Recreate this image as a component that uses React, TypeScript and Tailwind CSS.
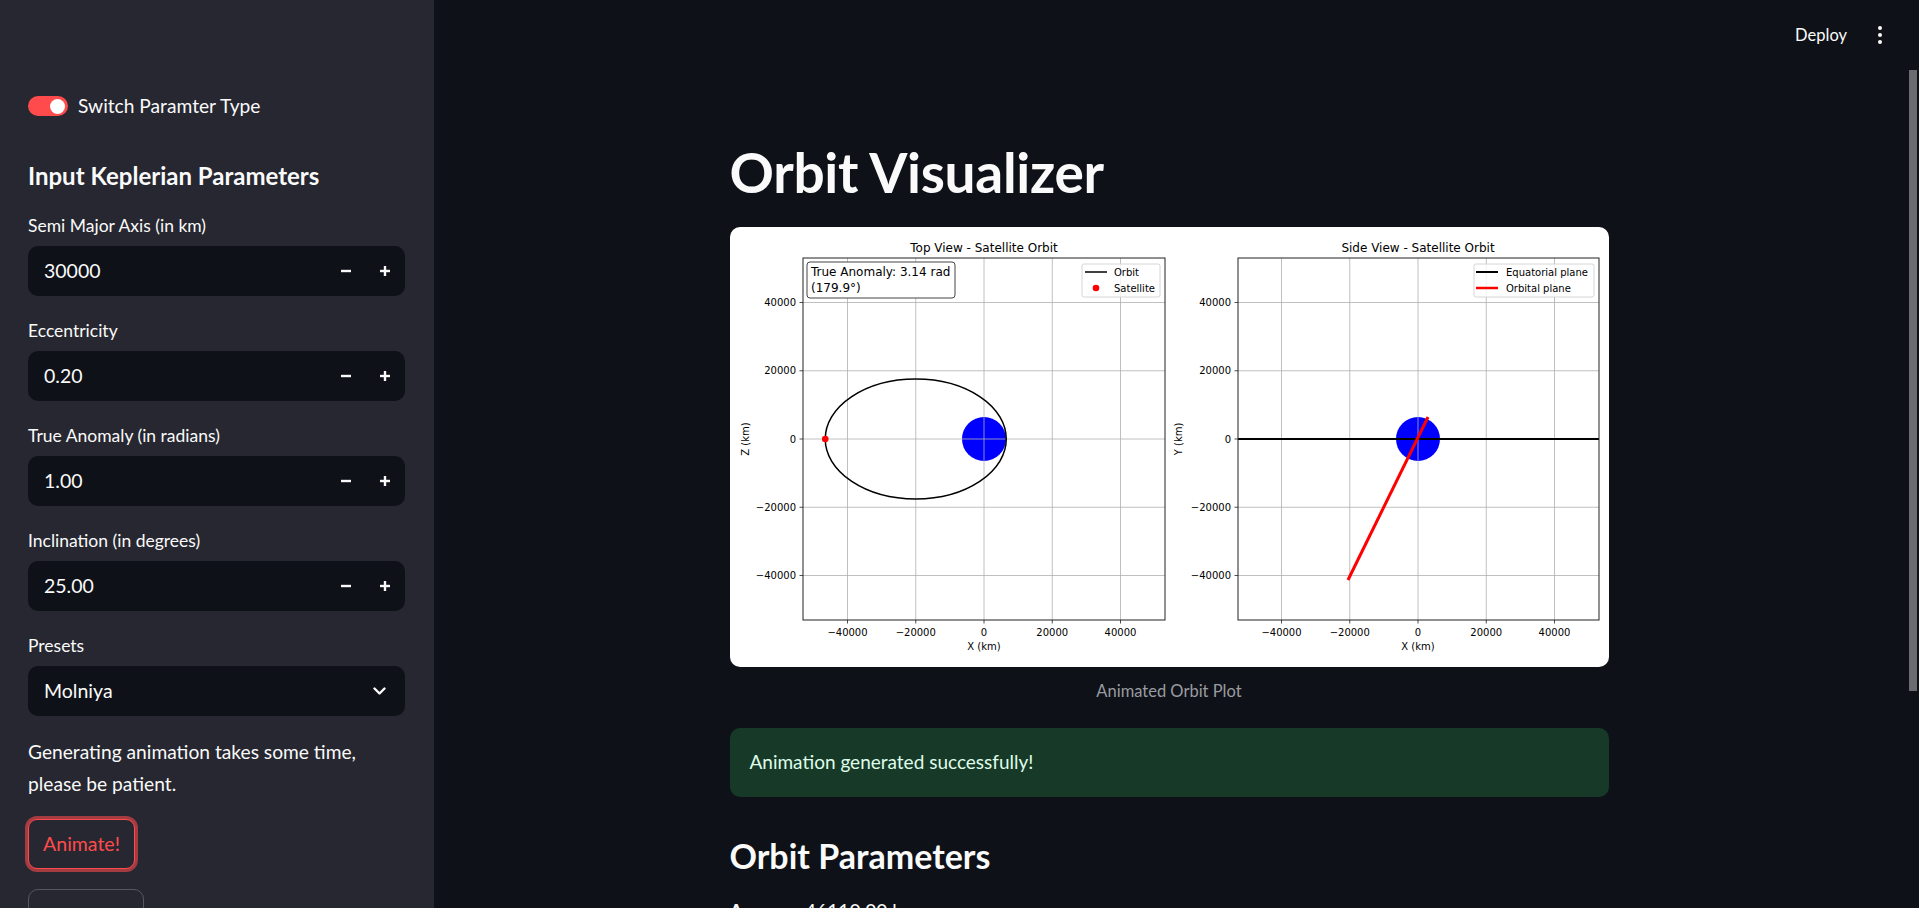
import React from "react";

const S = 136.5 / 40000;
const TICKS = [-40000, -20000, 0, 20000, 40000];
const CY = 212;
const Y0 = 31;
const Y1 = 393;

const fmt = (v: number) => (v < 0 ? "\u2212" + Math.abs(v) : String(v));

// one matplotlib axes: frame, grid, ticks and labels
function Axes({ x0, x1, cx, title, ylabel, ylabelX, children, overlay }: {
  x0: number;
  x1: number;
  cx: number;
  title: string;
  ylabel: string;
  ylabelX: number;
  children?: React.ReactNode;
  overlay?: React.ReactNode;
}) {
  return (
    <g fontFamily="'DejaVu Sans', sans-serif" fill="#000">
      <text x={cx} y={25} fontSize={12} textAnchor="middle">{title}</text>
      {children}
      {TICKS.map((t) => (
        <g key={"g" + t}>
          <line x1={cx + t * S} x2={cx + t * S} y1={Y0} y2={Y1} stroke="#b0b0b0" strokeWidth={0.8} />
          <line x1={x0} x2={x1} y1={CY - t * S} y2={CY - t * S} stroke="#b0b0b0" strokeWidth={0.8} />
        </g>
      ))}
      {overlay}
      <rect x={x0} y={Y0} width={x1 - x0} height={Y1 - Y0} fill="none" stroke="#222" strokeWidth={1} />
      {TICKS.map((t) => (
        <g key={"t" + t}>
          <line x1={cx + t * S} x2={cx + t * S} y1={Y1} y2={Y1 + 3.5} stroke="#222" strokeWidth={0.8} />
          <text x={cx + t * S} y={409} fontSize={10} textAnchor="middle">{fmt(t)}</text>
          <line x1={x0 - 3.5} x2={x0} y1={CY - t * S} y2={CY - t * S} stroke="#222" strokeWidth={0.8} />
          <text x={x0 - 7} y={CY - t * S + 3.5} fontSize={10} textAnchor="end">{fmt(t)}</text>
        </g>
      ))}
      <text x={cx} y={423} fontSize={10} textAnchor="middle">X (km)</text>
      <text x={ylabelX} y={CY} fontSize={10} textAnchor="middle" transform={`rotate(-90 ${ylabelX} ${CY})`} dy={3.5}>{ylabel}</text>
    </g>
  );
}

function OrbitPlot() {
  const lx = 254;
  const rx = 688;
  return (
    <svg width={879} height={440} viewBox="0 0 879 440" className="block">
      <Axes
        x0={73}
        x1={435}
        cx={lx}
        title="Top View - Satellite Orbit"
        ylabel="Z (km)"
        ylabelX={15}
        children={<circle cx={lx} cy={CY} r={22} fill="#0000ff" />}
        overlay={
          <g>
            <ellipse cx={lx - 20000 * S} cy={CY} rx={90.5} ry={60} fill="none" stroke="#000" strokeWidth={1.5} />
            <circle cx={lx - 20000 * S - 90.5} cy={CY} r={3.3} fill="#ff0000" />
            <rect x={77} y={35} width={148} height={36} rx={3} fill="#fff" stroke="#444" strokeWidth={1} />
            <text x={81} y={49} fontSize={12}>True Anomaly: 3.14 rad</text>
            <text x={81} y={65} fontSize={12}>(179.9°)</text>
            <rect x={352} y={37} width={78} height={33} rx={2} fill="#fff" fillOpacity={0.8} stroke="#d6d6d6" strokeWidth={1} />
            <line x1={355} x2={377} y1={45} y2={45} stroke="#000" strokeWidth={1.5} />
            <text x={384} y={48.5} fontSize={10}>Orbit</text>
            <circle cx={366} cy={61} r={3.3} fill="#ff0000" />
            <text x={384} y={64.5} fontSize={10}>Satellite</text>
          </g>
        }
      />
      <Axes
        x0={508}
        x1={869}
        cx={rx}
        title="Side View - Satellite Orbit"
        ylabel="Y (km)"
        ylabelX={448}
        children={<circle cx={rx} cy={CY} r={22} fill="#0000ff" />}
        overlay={
          <g>
            <line x1={508} x2={869} y1={CY} y2={CY} stroke="#000" strokeWidth={2} />
            <line x1={618} y1={353} x2={698} y2={190} stroke="#ff0000" strokeWidth={3} />
            <rect x={744} y={37} width={120} height={33} rx={2} fill="#fff" fillOpacity={0.8} stroke="#d6d6d6" strokeWidth={1} />
            <line x1={746} x2={768} y1={45} y2={45} stroke="#000" strokeWidth={2} />
            <text x={776} y={48.5} fontSize={10}>Equatorial plane</text>
            <line x1={746} x2={768} y1={61} y2={61} stroke="#ff0000" strokeWidth={2.5} />
            <text x={776} y={64.5} fontSize={10}>Orbital plane</text>
          </g>
        }
      />
    </svg>
  );
}

function NumberField({ label, value }: { label: string; value: string }) {
  return (
    <div className="mb-[21px]">
      <div className="h-[28px] flex items-center text-[17.5px] text-[#fafafa] mb-[6px]">{label}</div>
      <div className="h-[50px] rounded-[10px] bg-[#0e1117] flex items-center pl-[16px] pr-[14px]">
        <span className="flex-1 text-[19.5px] text-[#fafafa]">{value}</span>
        <svg width="12" height="12" viewBox="0 0 12 12" className="mr-[27px]">
          <line x1="1" y1="6" x2="11" y2="6" stroke="#fafafa" strokeWidth="2.4" />
        </svg>
        <svg width="12" height="12" viewBox="0 0 12 12">
          <line x1="1" y1="6" x2="11" y2="6" stroke="#fafafa" strokeWidth="2.4" />
          <line x1="6" y1="1" x2="6" y2="11" stroke="#fafafa" strokeWidth="2.4" />
        </svg>
      </div>
    </div>
  );
}

export default function App() {
  return (
    <div className="flex h-[908px] w-full overflow-hidden bg-[#0e1117] font-['Lato',sans-serif] text-[#fafafa]">
      {/* Sidebar */}
      <aside className="w-[434px] shrink-0 bg-[#262730] pl-[28px] pr-[29px] pt-[94px]">
        <div className="flex items-center h-[24px]">
          <div className="w-[40px] h-[20px] rounded-full bg-[#ff4b4b] flex items-center justify-end pr-[3px]">
            <div className="w-[15px] h-[15px] rounded-full bg-white" />
          </div>
          <span className="ml-[10px] text-[19.2px]">Switch Paramter Type</span>
        </div>
        <h3 className="mt-[42px] h-[32px] flex items-center text-[24px] font-bold">Input Keplerian Parameters</h3>
        <div className="mt-[20px]">
          <NumberField label="Semi Major Axis (in km)" value="30000" />
          <NumberField label="Eccentricity" value="0.20" />
          <NumberField label="True Anomaly (in radians)" value="1.00" />
          <NumberField label="Inclination (in degrees)" value="25.00" />
        </div>
        <div className="h-[28px] flex items-center text-[17.5px] mb-[6px]">Presets</div>
        <div className="h-[50px] rounded-[10px] bg-[#0e1117] flex items-center pl-[16px] pr-[19px]">
          <span className="flex-1 text-[19.5px]">Molniya</span>
          <svg width="13" height="8" viewBox="0 0 13 8">
            <path d="M1.5 1.5 L6.5 6.5 L11.5 1.5" fill="none" stroke="#fafafa" strokeWidth="2.4" strokeLinecap="round" strokeLinejoin="round" />
          </svg>
        </div>
        <p className="mt-[20px] text-[19.2px] leading-[32px]">
          Generating animation takes some time,
          <br />
          please be patient.
        </p>
        <div className="mt-[16px] w-[113px] rounded-[12px] p-[3px] bg-[#a33b40] -ml-[3px]">
          <button className="w-[107px] h-[50px] rounded-[9px] border border-[#ff4b4b] bg-[#262730] text-[#ff4b4b] text-[19.5px]">
            Animate!
          </button>
        </div>
        <button className="mt-[17px] w-[116px] h-[50px] rounded-[10px] border border-[#55565e] bg-[#262730] pt-[6px] text-[19.5px] text-[#fafafa]">
          Reset
        </button>
      </aside>

      {/* Main */}
      <main className="relative flex-1 pr-[15px]">
        <div className="flex items-center justify-end h-[70px]">
          <span className="text-[16.5px] mr-[31px]">Deploy</span>
          <div className="flex flex-col gap-[3px] mr-[22px] -mt-[1px]">
            <div className="w-[4px] h-[4px] rounded-full bg-[#fafafa]" />
            <div className="w-[4px] h-[4px] rounded-full bg-[#fafafa]" />
            <div className="w-[4px] h-[4px] rounded-full bg-[#fafafa]" />
          </div>
        </div>
        <div className="absolute right-[2px] top-[70px] w-[8px] h-[621px] bg-[#6b6c72]" />

        <div className="w-[879px] mx-auto">
          <h1 className="mt-[69px] h-[66px] flex items-center text-[55px] font-bold tracking-[-0.3px]">Orbit Visualizer</h1>
          <div className="mt-[22px] h-[440px] rounded-[10px] bg-white overflow-hidden">
            <OrbitPlot />
          </div>
          <div className="mt-[13px] h-[22px] flex items-center justify-center text-[16.5px] text-[#9a9ca1]">
            Animated Orbit Plot
          </div>
          <div className="mt-[26px] h-[69px] rounded-[10px] bg-[#173928] flex items-center px-[20px] text-[19px] text-[#dffde9]">
            Animation generated successfully!
          </div>
          <h2 className="mt-[36px] h-[44px] flex items-center text-[34px] font-bold">Orbit Parameters</h2>
          <p className="mt-[18px] text-[19.2px] leading-[32px]">
            <b>Apogee:</b> 46110.00 km
          </p>
        </div>
      </main>
    </div>
  );
}
